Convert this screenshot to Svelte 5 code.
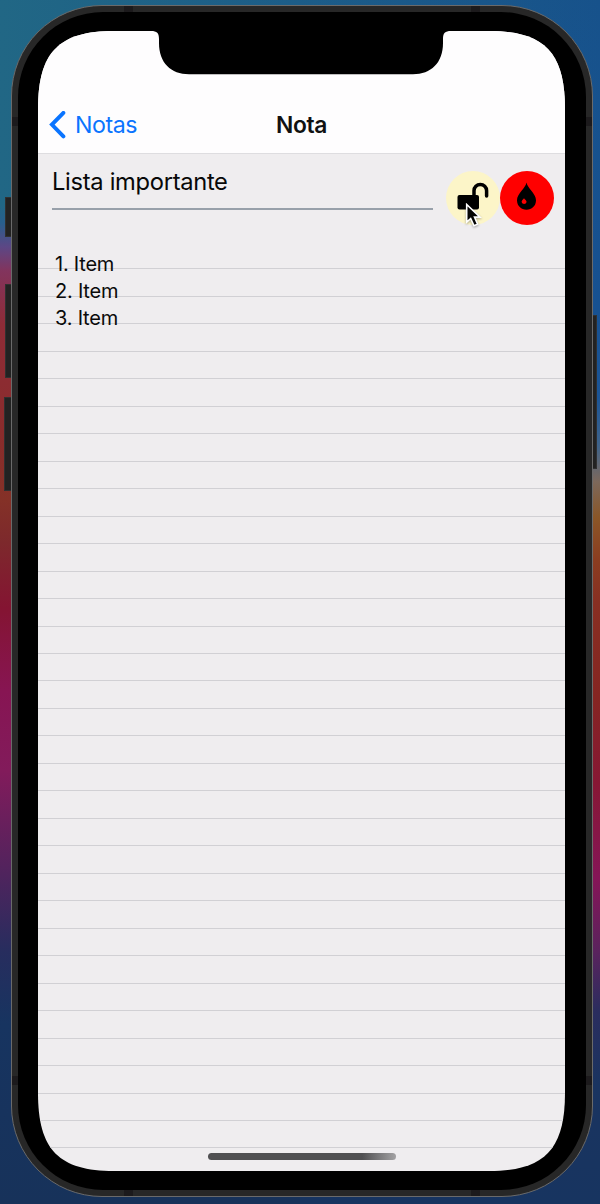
<script>
  const items = ['Item', 'Item', 'Item'];
  const rules = Array.from({ length: 33 });
</script>

<div class="desktop">
  <div class="wall left"></div>
  <div class="wall right"></div>
  <i class="key mute"></i>
  <i class="key up"></i>
  <i class="key down"></i>
  <i class="key power"></i>

  <div class="phone">
    <i class="band b1"></i><i class="band b2"></i><i class="band b3"></i><i class="band b4"></i>
    <i class="band v1"></i><i class="band v2"></i><i class="band v3"></i><i class="band v4"></i>
    <div class="bezel">
      <div class="screen">
        <header>
          <span class="back">
            <svg width="17" height="28" viewBox="0 0 17 28"><path d="M14.4 1.8 2.9 13.6l11.5 11.8" fill="none" stroke="#0a74ff" stroke-width="3.9" stroke-linecap="round" stroke-linejoin="miter" /></svg>
            <span>Notas</span>
          </span>
          <h1>Nota</h1>
        </header>
        <main>
          <div class="top">
            <div class="title">Lista importante</div>
            <div class="btn lock">
              <svg width="54" height="54" viewBox="0 0 54 54">
                <rect x="11.5" y="24" width="21.5" height="14.5" rx="2" />
                <path d="M28 26v-6.2a6.3 6.3 0 0 1 12.6 0v5.1" fill="none" stroke="#000" stroke-width="3.5" stroke-linecap="round" />
              </svg>
            </div>
            <div class="btn drop">
              <svg width="54" height="54" viewBox="0 0 54 54">
                <path d="M26.5 11.5C25.5 17.5 17 22.5 17 29.3C17 35 21.3 38.7 26.5 38.7S36 35 36 29.3C36 22.5 27.5 17.5 26.5 11.5Z" />
                <path d="M24 27.2c-1 1.2-2.4 2.2-2.4 3.9a2.6 2.6 0 0 0 5 0c0-1.6-1.7-2.7-2.6-3.9Z" fill="#ff0000" />
              </svg>
            </div>
          </div>
          <div class="paper">
            <div class="rules">{#each rules as _}<div class="rule"></div>{/each}</div>
            <div class="items">{#each items as item, i}<div>{i + 1}. {item}</div>{/each}</div>
          </div>
        </main>
        <div class="notch"><svg width="300" height="44" viewBox="0 0 300 44"><path d="M0 0H300C294 0 292 2 292 8V12C292 32 280 43.2 262 43.2H38C20 43.2 8 32 8 12V8C8 2 6 0 0 0Z" /></svg></div>
        <div class="home"></div>
      </div>
    </div>
  </div>

  <svg class="cursor" width="18" height="26" viewBox="0 0 18 26"><path d="M1.7 1.5V19.2L5.7 15.5 9 22.8 12.6 21.2 9.5 14.1H15Z" fill="#050505" stroke="#fff" stroke-width="1.6" /></svg>
</div>

<style>
  :global(body) { background: #17345f; }
  .desktop { position: relative; width: 600px; height: 1204px; overflow: hidden; display: flex; justify-content: flex-start; padding: 5px 0 0 11px; box-sizing: border-box; font-family: Inter, "Liberation Sans", sans-serif; background: linear-gradient(90deg, #216785, #17528b); }
  .wall { position: absolute; top: 0; bottom: 0; width: 300px; }
  .left { left: 0; background: linear-gradient(#20668500 0, #24658900 17%, #285f8d 18.5%, #5c4785 20.5%, #82345d 22.5%, #8e2c37 27%, #8a2c2c 36%, #843127 41.5%, #7d292c 45%, #841432 50.5%, #871553 57.5%, #821b5b 64%, #53235d 72%, #272d5e 79%, #173460 85%, #17325a 100%); }
  .right { right: 0; background: linear-gradient(#18528a00 0, #175191 26%, #1b5597 33%, #3f638a 37%, #7c685b 40%, #8a5627 43%, #8a3d20 46.5%, #882f22 50%, #852522 58%, #871734 65%, #851557 73%, #5a235d 79%, #2a2d5e 84%, #1a3460 90%, #173460 100%); }
  .key { position: absolute; background: #222; border: 1px solid #303030; box-sizing: border-box; }
  .mute { left: 5px; top: 197px; width: 8px; height: 40px; }
  .up { left: 5px; top: 284px; width: 8px; height: 94px; }
  .down { left: 4px; top: 397px; width: 9px; height: 94px; }
  .power { left: 591px; top: 315px; width: 6px; height: 154px; }
  .phone { position: relative; width: 582px; height: 1192px; flex: none; box-sizing: border-box; border: 1px solid #6a6a6a; border-radius: 91px; background: #272727; padding: 6px 6px 5px; overflow: hidden; }
  .bezel { position: relative; height: 1178px; border-radius: 85px; background: #000; padding: 19px 21px 0 20px; box-sizing: border-box; }
  .band { position: absolute; background: #1c1a1c; }
  .b1, .b2 { top: 0; width: 9px; height: 6px; }
  .b3, .b4 { bottom: 0; width: 9px; height: 6px; }
  .b1, .b3 { left: 112px; }
  .b2, .b4 { right: 112px; }
  .v1, .v2 { top: 111px; width: 6px; height: 9px; }
  .v3, .v4 { bottom: 111px; width: 6px; height: 9px; }
  .v1, .v3 { left: 0; }
  .v2, .v4 { right: 0; }
  .screen { position: relative; width: 527px; height: 1140px; background: #efedef; display: flex; flex-direction: column; clip-path: path("M76 0H451C506 0 527 21 527 78V1062C527 1119 506 1140 451 1140H76C21 1140 0 1119 0 1062V78C0 21 21 0 76 0Z"); }
  header { flex: none; height: 123px; box-sizing: border-box; background: #fefdfe; border-bottom: 1px solid #dedde0; padding: 78px 11px 0; display: grid; grid-template-columns: 1fr auto 1fr; line-height: 32px; }
  .back { display: flex; gap: 9px; height: 32px; align-items: center; color: #0a74ff; font-size: 23.2px; letter-spacing: -0.45px; }
  h1 { margin: 0; font-size: 22.8px; font-weight: 600; letter-spacing: -0.3px; color: #111; }
  main { flex: 1; display: flex; flex-direction: column; min-height: 0; }
  .top { display: flex; height: 87px; padding: 12px 11px 0 14px; align-items: flex-start; box-sizing: border-box; }
  .title { width: 381px; margin-right: 13px; height: 44px; box-sizing: border-box; border-bottom: 2px solid #98a0aa; line-height: 31px; font-size: 23.7px; letter-spacing: -0.3px; color: #080808; }
  .btn { width: 54px; height: 54px; border-radius: 50%; margin-top: 5px; }
  .btn svg { display: block; }
  .lock { background: #fcf5c8; }
  .drop { background: #ff0000; }
  .paper { position: relative; flex: 1; min-height: 0; padding: 10px 17px; }
  .rules { position: absolute; inset: 0; overflow: hidden; }
  .rule { height: 27.47px; box-sizing: border-box; border-bottom: 1px solid #d1d0d4; }
  .rule:first-child { height: 28.45px; }
  .items { position: relative; font-size: 20px; line-height: 27px; letter-spacing: -0.22px; color: #0a0a0a; }
  .notch { position: absolute; top: 0; left: 113px; height: 44px; }
  .notch svg { display: block; }
  .home { position: absolute; left: 170px; bottom: 11px; width: 188px; height: 7px; border-radius: 4px; background: linear-gradient(90deg, #505052 82%, #a3a2a4); }
  .cursor { position: absolute; left: 465px; top: 203px; filter: drop-shadow(0 1px 1px #0005); }
</style>
